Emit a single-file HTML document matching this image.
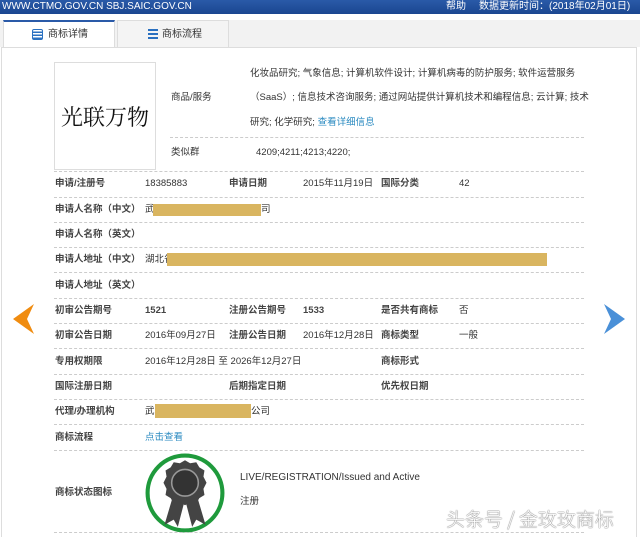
<!DOCTYPE html>
<html><head><meta charset="utf-8"><style>
*{margin:0;padding:0;box-sizing:border-box}
body{width:640px;height:535px;overflow:hidden;background:#fff;font-family:"Liberation Sans","Noto Sans CJK SC",sans-serif;font-size:10px;color:#333;position:relative}
.hdr{position:absolute;left:0;top:0;width:640px;height:14px;background:linear-gradient(#2a5aa8,#1a4690);color:#fff;font-size:10px;line-height:14px}
.tabs{position:absolute;top:20px;left:0;width:640px;height:27px;background:#f2f2f2}
.tab{position:absolute;top:0;height:27px;line-height:27px;font-size:10px;color:#333}
.box{position:absolute;left:1px;top:47px;width:636px;height:490px;border:1px solid #ddd;border-bottom:none}
.t{position:absolute;white-space:nowrap;font-size:9.5px;line-height:12px}
.b{font-weight:bold;color:#444}
.sep{position:absolute;left:54px;width:530px;border-top:1px dashed #ccc}
.red{position:absolute;background:#d9b560}
.lk{color:#2a8ac0}
</style></head><body>
<div class="hdr"><span style="position:absolute;left:2px">WWW.CTMO.GOV.CN SBJ.SAIC.GOV.CN</span><span style="position:absolute;left:446px">帮助</span><span style="position:absolute;left:479px">数据更新时间：(2018年02月01日)</span></div>
<div class="tabs">
<div class="tab" style="left:3px;width:112px;background:#fff;border:1px solid #ddd;border-bottom:none;border-top:2px solid #2a5aa8;height:28px;line-height:25px"><span style="position:absolute;left:28px;top:7px;width:11px;height:11px;border:1.5px solid #2a70c0;border-radius:2px;background:repeating-linear-gradient(#fff 0 1.5px,#2a70c0 1.5px 3px)"></span><span style="position:absolute;left:44px">商标详情</span></div>
<div class="tab" style="left:117px;width:112px;border:1px solid #ddd;border-bottom:none;background:#f4f4f4"><span style="position:absolute;left:30px;top:8px;width:10px;height:10px;background:repeating-linear-gradient(#2a70c0 0 2px,transparent 2px 4px)"></span><span style="position:absolute;left:44px">商标流程</span></div>
</div>
<div class="box"></div>
<div style="position:absolute;left:54px;top:62px;width:102px;height:108px;border:1px solid #ddd;font-family:'Noto Serif CJK SC',serif;font-size:22px;line-height:108px;text-align:center;color:#111">光联万物</div>
<div class="t" style="left:171px;top:92px">商品/服务</div>
<div class="t" style="left:250px;top:68px">化妆品研究; 气象信息; 计算机软件设计; 计算机病毒的防护服务; 软件运营服务</div>
<div class="t" style="left:250px;top:92px">（SaaS）; 信息技术咨询服务; 通过网站提供计算机技术和编程信息; 云计算; 技术</div>
<div class="t" style="left:250px;top:117px">研究; 化学研究; <span class="lk">查看详细信息</span></div>
<div class="sep" style="left:170px;width:414px;top:137px"></div>
<div class="t" style="left:171px;top:147px">类似群</div>
<div class="t" style="left:256px;top:147px">4209;4211;4213;4220;</div>
<div class="sep" style="top:171px"></div>

<div class="t b" style="left:55px;top:178px">申请/注册号</div><div class="t" style="left:145px;top:178px">18385883</div><div class="t b" style="left:229px;top:178px">申请日期</div><div class="t" style="left:303px;top:178px">2015年11月19日</div><div class="t b" style="left:381px;top:178px">国际分类</div><div class="t" style="left:459px;top:178px">42</div>
<div class="sep" style="top:197px"></div>
<div class="t b" style="left:55px;top:204px">申请人名称（中文）</div><div class="t" style="left:145px;top:204px">武</div><div class="red" style="left:153px;top:204px;width:108px;height:12px"></div><div class="t" style="left:261px;top:204px">司</div>
<div class="sep" style="top:222px"></div>
<div class="t b" style="left:55px;top:229px">申请人名称（英文）</div>
<div class="sep" style="top:247px"></div>
<div class="t b" style="left:55px;top:254px">申请人地址（中文）</div><div class="t" style="left:145px;top:254px">湖北省</div><div class="red" style="left:167px;top:253px;width:380px;height:13px"></div>
<div class="sep" style="top:272px"></div>
<div class="t b" style="left:55px;top:280px">申请人地址（英文）</div>
<div class="sep" style="top:298px"></div>
<div class="t b" style="left:55px;top:305px">初审公告期号</div><div class="t b" style="left:145px;top:305px">1521</div><div class="t b" style="left:229px;top:305px">注册公告期号</div><div class="t b" style="left:303px;top:305px">1533</div><div class="t b" style="left:381px;top:305px">是否共有商标</div><div class="t" style="left:459px;top:305px">否</div>
<div class="sep" style="top:323px"></div>
<div class="t b" style="left:55px;top:330px">初审公告日期</div><div class="t" style="left:145px;top:330px">2016年09月27日</div><div class="t b" style="left:229px;top:330px">注册公告日期</div><div class="t" style="left:303px;top:330px">2016年12月28日</div><div class="t b" style="left:381px;top:330px">商标类型</div><div class="t" style="left:459px;top:330px">一般</div>
<div class="sep" style="top:348px"></div>
<div class="t b" style="left:55px;top:356px">专用权期限</div><div class="t" style="left:145px;top:356px">2016年12月28日 至 2026年12月27日</div><div class="t b" style="left:381px;top:356px">商标形式</div>
<div class="sep" style="top:374px"></div>
<div class="t b" style="left:55px;top:381px">国际注册日期</div><div class="t b" style="left:229px;top:381px">后期指定日期</div><div class="t b" style="left:381px;top:381px">优先权日期</div>
<div class="sep" style="top:399px"></div>
<div class="t b" style="left:55px;top:406px">代理/办理机构</div><div class="t" style="left:145px;top:406px">武</div><div class="red" style="left:155px;top:404px;width:96px;height:14px"></div><div class="t" style="left:251px;top:406px">公司</div>
<div class="sep" style="top:424px"></div>
<div class="t b" style="left:55px;top:432px">商标流程</div><div class="t lk" style="left:145px;top:432px">点击查看</div>
<div class="sep" style="top:450px"></div>
<div class="t b" style="left:55px;top:487px">商标状态图标</div>
<svg style="position:absolute;left:144px;top:452px" width="82" height="82" viewBox="0 0 80 80">
<circle cx="40" cy="40" r="36.5" fill="#fff" stroke="#1f9a3c" stroke-width="4"/>
<path d="M28 44 L20 71 L29 66 L33 73 L39 50 Z M52 44 L60 71 L51 66 L47 73 L41 50 Z" fill="#444"/>
<path d="M40 8 L45 11 L51 10 L54 15 L59 18 L58 24 L61 30 L58 36 L59 42 L54 45 L51 50 L45 49 L40 52 L35 49 L29 50 L26 45 L21 42 L22 36 L19 30 L22 24 L21 18 L26 15 L29 10 L35 11 Z" fill="#444"/>
<circle cx="40" cy="30" r="13" fill="#333" stroke="#999" stroke-width="1.5"/>
</svg>
<div class="t" style="left:240px;top:472px;font-size:10px">LIVE/REGISTRATION/Issued and Active</div>
<div class="t" style="left:240px;top:496px">注册</div>
<div class="sep" style="top:532px"></div>
<svg style="position:absolute;left:12px;top:304px" width="24" height="30"><path d="M22 0 L1 15 L22 30 L15 15 Z" fill="#f08c10"/></svg>
<svg style="position:absolute;left:602px;top:304px" width="24" height="30"><path d="M2 0 L23 15 L2 30 L9 15 Z" fill="#4a90d8"/></svg>
<div style="position:absolute;left:446px;top:505px;font-size:19px;color:#fff;text-shadow:0 0 1px #666,0 0 1px #666;white-space:nowrap;font-family:'Noto Sans CJK SC',sans-serif;font-weight:300">头条号 / 金玫玫商标</div>
</body></html>
